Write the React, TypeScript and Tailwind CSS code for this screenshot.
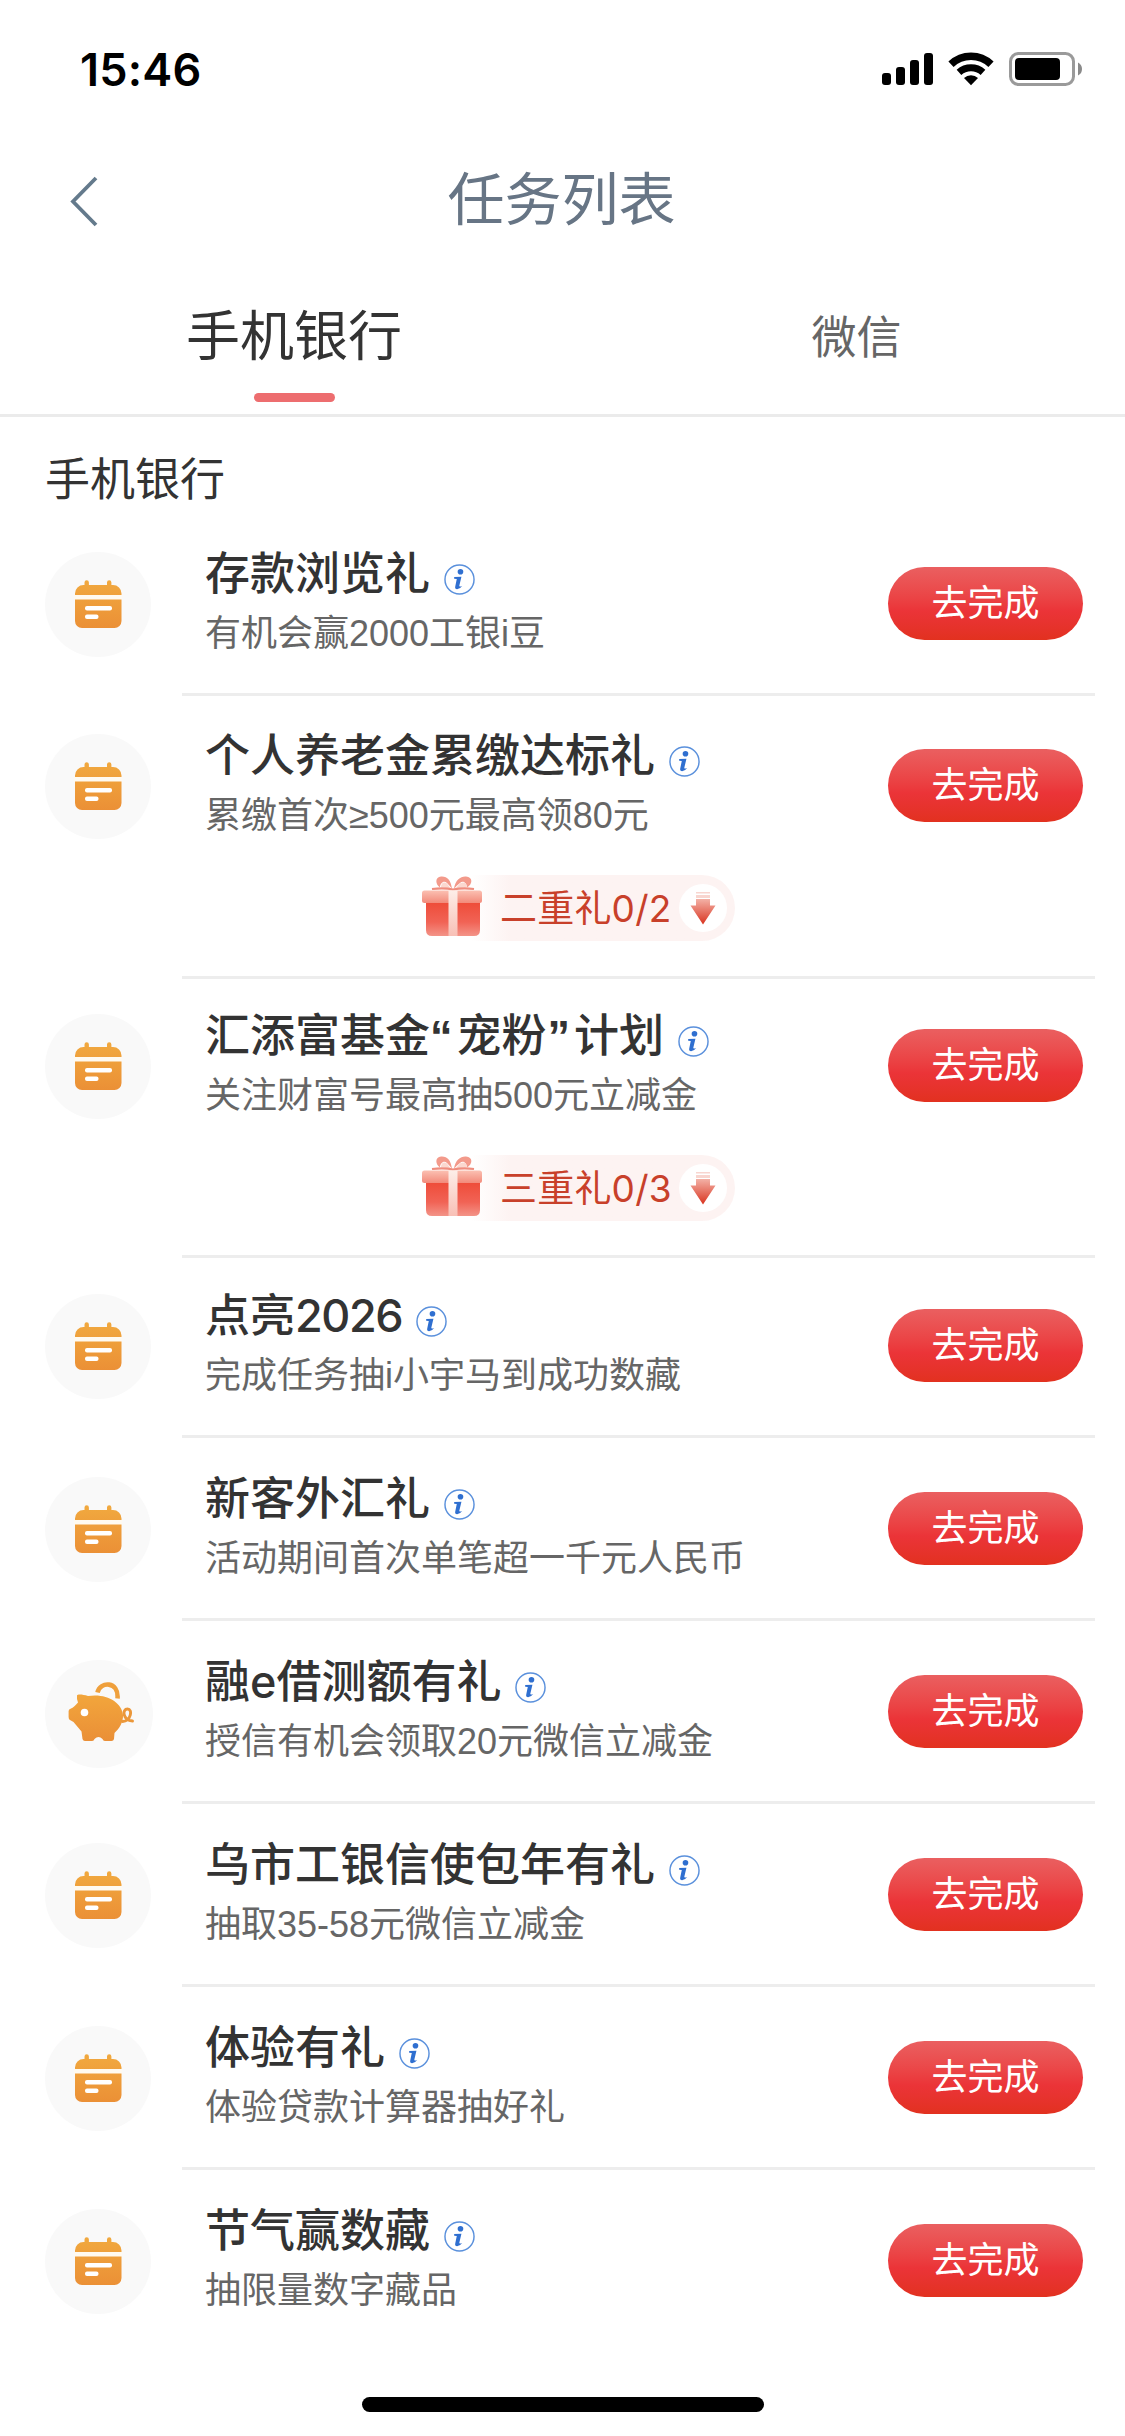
import { clsx } from 'clsx';
import type { ReactNode } from 'react';

type IconName = 'calendar' | 'piggy';

interface Task {
  title: ReactNode;
  desc: string;
  icon?: IconName;
  gift?: string;
  layout: string;
}

const tasks: Task[] = [
  { title: '存款浏览礼', desc: '有机会赢2000工银i豆', layout: 'h-[162px]' },
  { title: '个人养老金累缴达标礼', desc: '累缴首次≥500元最高领80元', gift: '二重礼0/2', layout: 'h-[283px] pt-[20px]' },
  {
    title: (
      <>
        汇添富基金
        <span className="font-['Liberation_Sans'] font-bold tracking-[4px]">“</span>宠粉
        <span className="pl-[1px] font-['Liberation_Sans'] font-bold tracking-[4px]">”</span>
        计划
      </>
    ),
    desc: '关注财富号最高抽500元立减金',
    gift: '三重礼0/3',
    layout: 'h-[279px] pt-[17px]',
  },
  {
    title: (
      <>
        点亮<span className="tracking-[-1.4px]">2026</span>
      </>
    ),
    desc: '完成任务抽i小宇马到成功数藏',
    layout: 'h-[180px] pt-[18px]',
  },
  { title: '新客外汇礼', desc: '活动期间首次单笔超一千元人民币', layout: 'h-[183px] pt-[21px]' },
  { title: '融e借测额有礼', desc: '授信有机会领取20元微信立减金', icon: 'piggy', layout: 'h-[183px] pt-[21px]' },
  { title: '乌市工银信使包年有礼', desc: '抽取35-58元微信立减金', layout: 'h-[183px] pt-[21px]' },
  { title: '体验有礼', desc: '体验贷款计算器抽好礼', layout: 'h-[183px] pt-[21px]' },
  { title: '节气赢数藏', desc: '抽限量数字藏品', layout: 'h-[183px] pt-[21px]' },
];

function StatusBar() {
  return (
    <div className="flex h-[138px] shrink-0 items-center justify-between pl-[80px] pr-[43px]">
      <span className="pt-[1px] font-['Inter'] text-[45px] font-semibold tracking-[0.2px] text-black">15:46</span>
      <svg width="202" height="36" viewBox="880 51 202 36">
        <rect x="882" y="73" width="9" height="12" rx="3" />
        <rect x="896" y="67" width="9" height="18" rx="3" />
        <rect x="910" y="60" width="9" height="25" rx="3" />
        <rect x="924" y="53" width="9" height="32" rx="3" />
        <path d="M951 64.300a29 29 0 0 1 40 0" fill="none" stroke="#000" strokeWidth="7.500" />
        <path d="M959 72.300a18 18 0 0 1 24 0" fill="none" stroke="#000" strokeWidth="7" />
        <path d="M964 78a10.500 10.500 0 0 1 14 0L971 85.200z" />
        <rect x="1010.500" y="53.500" width="63" height="31" rx="8" fill="none" stroke="#9a9a9a" strokeWidth="3" />
        <rect x="1015" y="58" width="45" height="22" rx="4" />
        <path d="M1078 62.500q4 2 4 6.500t-4 6.500z" fill="#8a8a8a" />
      </svg>
    </div>
  );
}

function CalendarIcon() {
  return (
    <svg className="mb-[2px]" width="48" height="48" viewBox="0 0 48 48">
      <defs>
        <linearGradient id="cal" x1="0" y1="0" x2="0" y2="1">
          <stop offset="0" stopColor="#f1a93f" />
          <stop offset="1" stopColor="#eb9036" />
        </linearGradient>
      </defs>
      <path
        fill="url(#cal)"
        d="M10.500 5V2.500a2.200 2.200 0 0 1 4.400 0V5H33V2.500a2.200 2.200 0 0 1 4.400 0V5H39a8.500 8.500 0 0 1 8.500 8.500V41a7 7 0 0 1-7 7H8a7 7 0 0 1-7-7V13.500A8.500 8.500 0 0 1 9.500 5z"
      />
      <rect y="15" width="48" height="4.500" fill="#fffaf0" />
      <rect x="11" y="26" width="27" height="4.600" rx="2" fill="#fff" />
      <rect x="11" y="34.500" width="13.500" height="4.600" rx="2" fill="#fff" />
    </svg>
  );
}

function PiggyIcon() {
  return (
    <svg className="mb-[5px] ml-1" width="66" height="60" viewBox="0 0 66 60">
      <defs>
        <linearGradient id="pig" x1="0" y1="0" x2="0" y2="1">
          <stop offset="0" stopColor="#f2a63c" />
          <stop offset="1" stopColor="#ea8f37" />
        </linearGradient>
      </defs>
      <path d="M29.500 10.500C32-1 51-1 49.500 16.500" fill="none" stroke="#efa03c" strokeWidth="4.600" />
      <path
        fill="url(#pig)"
        d="M9 13.500C9.500 12 14 12 20 14C38 11 54 20 55 33C55.500 40 51 47 46.500 51L46 57Q45.500 59 43.500 59H37Q35 59 34.500 57Q30.500 53 26.500 57Q26 59 24 59H17Q15 59 14.500 57L13.500 49.500L5.500 40L2 38Q.6 37.500.6 35V29Q.6 27 3 26.500C5 26 7 23.500 10 20.500Q8.500 17 9 13.500z"
      />
      <circle cx="16.500" cy="30.500" r="3.800" fill="#fff" />
      <path d="M54.500 39.500C63 39 65 27 59.500 27S54.500 38 64.500 39" fill="none" stroke="#eb973a" strokeWidth="2.900" strokeLinecap="round" />
    </svg>
  );
}

function InfoIcon() {
  return (
    <svg className="mt-[30px] ml-[14px] shrink-0" width="31" height="31" viewBox="0 0 32 32">
      <circle cx="16" cy="16" r="15" fill="none" stroke="#5a90dc" strokeWidth="1.500" />
      <circle cx="17" cy="8" r="2.900" fill="#2f6fd0" />
      <path
        d="M10.500 13.500L18 13.200L15.800 22.500Q15.600 24 18.800 22.600Q16.200 26 13.500 26Q11 26 11.600 23.200L13.200 15.500L10.500 15.200z"
        fill="#2f6fd0"
      />
    </svg>
  );
}

function GiftIcon() {
  return (
    <svg className="relative shrink-0" width="62" height="62" viewBox="0 0 62 62">
      <defs>
        <linearGradient id="lid" x1="0" y1="0" x2="0" y2="1">
          <stop offset="0" stopColor="#fbc0b2" />
          <stop offset="1" stopColor="#f28a7a" />
        </linearGradient>
        <linearGradient id="box" x1="0" y1="0" x2="0" y2="1">
          <stop offset="0" stopColor="#ee4a37" />
          <stop offset="0.600" stopColor="#f16355" />
          <stop offset="1" stopColor="#f39488" />
        </linearGradient>
        <linearGradient id="ribbon" x1="0" y1="0" x2="0" y2="1">
          <stop offset="0" stopColor="#fdeee8" />
          <stop offset="1" stopColor="#f8c0b6" />
        </linearGradient>
      </defs>
      {/* Bow */}
      <path
        d="M31 14C30 5 26 1 20 1.500C14 2 14 9 19 12.500C19 8 23 5 26 8Q29 11 31 14ZM33 14C34 5 40 1 45 1.500C52 2 52 9 46 12.500C46 8 42 5 39 8Q35 11 33 14Z"
        fill="#f39a8b"
      />
      <path d="M20 12C20 8 23 6 26 8.500L30 14zM46 12C46 8 42 6 39 8.500L34 14z" fill="#fbd8cf" />
      <path d="M11 14q12-1.500 21 .5q10-2 21-.5" fill="none" stroke="#ef8d7e" strokeWidth="2.200" />
      <path d="M5 26h54v29q0 6-6 6H11q-6 0-6-6z" fill="url(#box)" />
      <rect x="1" y="15.500" width="60" height="12.500" rx="2.500" fill="url(#lid)" />
      <rect x="27.500" y="15.500" width="9" height="45.500" fill="url(#ribbon)" />
    </svg>
  );
}

function GiftBadge({ label }: { label: string }) {
  return (
    <div className="ml-[421px] flex h-[66px] items-start">
      <GiftIcon />
      <div className="-ml-3 flex h-[66px] w-[264px] items-center rounded-r-full bg-linear-to-r from-white via-[#fdf3f2] via-15% to-[#fdf3f2] pl-[29px] pr-[9px]">
        <span className="w-[171px] whitespace-nowrap pt-[1px] font-['Inter','Noto_Sans_CJK_SC',sans-serif] text-[37px] tracking-[0.2px] text-[#c8402a]">
          {label}
        </span>
        <span className="ml-[8px] flex h-[48px] w-[48px] shrink-0 items-center justify-center rounded-full bg-white">
          <svg width="26" height="34" viewBox="0 0 26 34">
            <defs>
              <linearGradient id="arrow" x1="0" y1="0" x2="0" y2="1">
                <stop offset="0" stopColor="#f3b1a6" />
                <stop offset="1" stopColor="#d9331f" />
              </linearGradient>
            </defs>
            <path d="M6 1h14v1.500H6zM6 4h14v3H6z" fill="#f8d5cf" />
            <path d="M6 8h14v6.500h5.500L13 33.500.5 14.500H6z" fill="url(#arrow)" />
          </svg>
        </span>
      </div>
    </div>
  );
}

function TaskRow({ task, last }: { task: Task; last: boolean }) {
  const piggy = task.icon === 'piggy';

  return (
    <div className={clsx('relative shrink-0', task.layout)}>
      <div className="flex items-start pl-[45px] pr-[42px]">
        <div
          className={clsx(
            'mt-[18px] flex shrink-0 items-center justify-center rounded-full bg-[#f9f9f9]',
            piggy ? 'mr-[52px] h-[108px] w-[108px]' : 'mr-[54px] h-[105px] w-[106px]'
          )}
        >
          {piggy ? <PiggyIcon /> : <CalendarIcon />}
        </div>
        <div className="flex-1 whitespace-nowrap">
          <div className="flex h-[70px] items-start">
            <h3 className="pt-[10px] font-['Inter','Noto_Sans_CJK_SC',sans-serif] text-[45px] leading-[59px] font-medium text-[#333]">
              {task.title}
            </h3>
            <InfoIcon />
          </div>
          <p className="text-[36px] leading-[60px] text-[#666]">{task.desc}</p>
        </div>
        <button className="mt-[33px] h-[73px] w-[195px] shrink-0 rounded-full bg-linear-to-b from-[#ea5f60] via-[#eb3438] via-60% to-[#e2311f] text-[36px] text-white">
          去完成
        </button>
      </div>
      {task.gift && (
        <div className="mt-[29px]">
          <GiftBadge label={task.gift} />
        </div>
      )}
      {!last && <div className="absolute right-[30px] bottom-0 left-[182px] h-[3px] bg-[#ededed]" />}
    </div>
  );
}

export default function App() {
  return (
    <div className="flex h-[2436px] w-[1125px] flex-col overflow-hidden bg-white font-['Liberation_Sans','Noto_Sans_CJK_SC',sans-serif]">
      <StatusBar />

      {/* Title bar */}
      <header className="grid h-[126px] shrink-0 grid-cols-3 items-center pl-[69px] pr-[71px]">
        <svg width="30" height="52" viewBox="0 0 30 52">
          <path d="M27 3 4 26.500 27 50" fill="none" stroke="#647a8c" strokeWidth="3.800" />
        </svg>
        <h1 className="text-center text-[57px] text-[#677585]">任务列表</h1>
      </header>

      {/* Tabs */}
      <nav className="flex h-[153px] shrink-0 border-b-[3px] border-[#ebebeb]">
        <div className="flex w-[588px] flex-col items-center">
          <span className="mt-[33px] text-[54px] leading-[80px] text-[#333]">手机银行</span>
          <span className="mt-[16px] h-[9px] w-[81px] rounded-full bg-[#ed6d6f]" />
        </div>
        <div className="flex flex-1 justify-center">
          <span className="mt-[35px] text-[45px] leading-[80px] text-[#666]">微信</span>
        </div>
      </nav>

      <h2 className="mt-[34px] ml-[45px] h-[83px] shrink-0 text-[45px] leading-[60px] text-[#333]">手机银行</h2>
      {tasks.map((task, i) => (
        <TaskRow key={task.desc} task={task} last={i === tasks.length - 1} />
      ))}

      {/* Home indicator */}
      <div className="mt-auto mb-[24px] h-[15px] w-[402px] shrink-0 self-center rounded-full bg-black" />
    </div>
  );
}
